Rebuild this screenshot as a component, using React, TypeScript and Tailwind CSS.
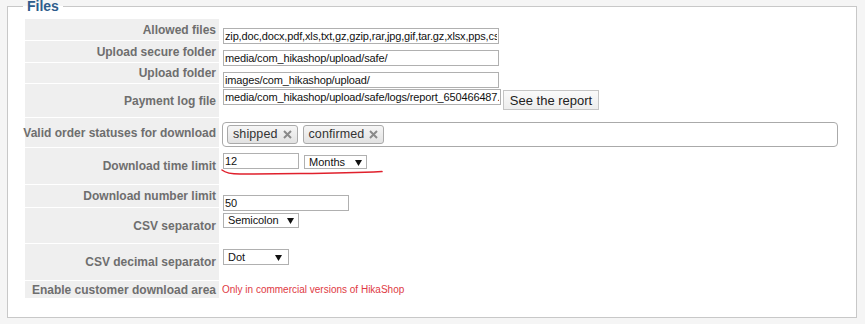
import React from "react";

function Arrow() {
  return (
    <svg width="7" height="7" viewBox="0 0 7 7" className="shrink-0">
      <polygon points="0,1 7,1 3.5,7" fill="#111" />
    </svg>
  );
}

function Cross() {
  return (
    <svg width="9" height="9" viewBox="0 0 9 9" className="shrink-0">
      <path d="M1 1 L8 8 M8 1 L1 8" stroke="#8a8a8a" strokeWidth="2" />
    </svg>
  );
}

function Tag({ text }: { text: string }) {
  return (
    <div className="flex h-[19px] items-center gap-[5px] rounded-[3px] border border-[#aaaaaa] bg-gradient-to-b from-[#f6f6f6] to-[#e2e2e2] pl-[5px] pr-[5px] text-[12.5px] tracking-[0.1px] text-[#333]">
      <span>{text}</span>
      <Cross />
    </div>
  );
}

const labelCls =
  "w-[194px] shrink-0 bg-[#efefef] flex items-center justify-end pr-[3px] text-[12px] font-bold text-[#6e6e6e] whitespace-nowrap";
const inputCls =
  "h-[16px] border border-[#b0b0b0] bg-white px-[1px] text-[11px] tracking-[-0.15px] text-[#111] outline-none";

export default function App() {
  return (
    <div className="w-[865px] h-[324px] bg-[#f5f5f5] pl-[7px] [font-family:'Liberation_Sans',Arial,sans-serif]">
      <fieldset className="box-border w-[850px] h-[318px] border border-[#c8c8c8] bg-white pl-[15px]">
        <legend className="px-[4px] text-[14px] leading-[13px] font-bold text-[#2d5c8c]">
          Files
        </legend>
        <div className="mt-[6px] ml-[2px] flex flex-col gap-[1px]">
          <div className="flex h-[21px]">
            <div className={labelCls}>Allowed files</div>
            <div className="ml-[1px] pl-[3px] pt-[4px]">
              <input
                readOnly
                value="zip,doc,docx,pdf,xls,txt,gz,gzip,rar,jpg,gif,tar.gz,xlsx,pps,csv,bmp,epub,mp3"
                className={inputCls + " w-[276px]"}
              />
            </div>
          </div>
          <div className="flex h-[21px]">
            <div className={labelCls}>Upload secure folder</div>
            <div className="ml-[1px] pl-[3px] pt-[4px]">
              <input readOnly value="media/com_hikashop/upload/safe/" className={inputCls + " w-[276px]"} />
            </div>
          </div>
          <div className="flex h-[20px]">
            <div className={labelCls}>Upload folder</div>
            <div className="ml-[1px] pl-[3px] pt-[4px]">
              <input readOnly value="images/com_hikashop/upload/" className={inputCls + " w-[276px]"} />
            </div>
          </div>
          <div className="flex h-[33px]">
            <div className={labelCls}>Payment log file</div>
            <div className="ml-[1px] pl-[3px] pt-[5px] flex items-start gap-[2px]">
              <input
                readOnly
                value="media/com_hikashop/upload/safe/logs/report_650466487.log"
                className={inputCls + " w-[278px]"}
              />
              <button className="mt-[1px] h-[20px] w-[96px] border border-[#c5c5c5] bg-gradient-to-b from-[#fafafa] to-[#ededed] text-[13px] text-[#222]">
                See the report
              </button>
            </div>
          </div>
          <div className="flex h-[29px]">
            <div className={labelCls}>Valid order statuses for download</div>
            <div className="ml-[1px] pl-[2px] pt-[4px]">
              <div className="box-border flex h-[25px] w-[616px] items-start gap-[5px] rounded-[4px] border border-[#aaaaaa] bg-white pl-[4px] pt-[2px]">
                <Tag text="shipped" />
                <Tag text="confirmed" />
              </div>
            </div>
          </div>
          <div className="flex h-[36px]">
            <div className={labelCls}>Download time limit</div>
            <div className="relative ml-[1px] pl-[3px] pt-[5px] flex items-start gap-[5px]">
              <input readOnly value="12" className={inputCls + " w-[76px]"} />
              <div className="mt-[2px] flex h-[14px] w-[63px] items-center justify-between border border-[#b0b0b0] bg-white pl-[4px] pr-[4px] text-[11px] text-[#111]">
                <span>Months</span>
                <Arrow />
              </div>
              <svg width="170" height="36" viewBox="0 0 170 36" className="pointer-events-none absolute left-0 top-0">
                <path
                  d="M2 22 Q 7 26 20 26 L 80 25.6 Q 130 25.2 162 23.6"
                  fill="none"
                  stroke="#e0202c"
                  strokeWidth="1.5"
                  strokeLinecap="round"
                />
              </svg>
            </div>
          </div>
          <div className="flex h-[22px]">
            <div className={labelCls}>Download number limit</div>
            <div className="ml-[1px] pl-[3px] pt-[5px]">
              <input readOnly value="50" className={inputCls + " w-[126px]"} />
            </div>
          </div>
          <div className="flex h-[35px]">
            <div className={labelCls}>CSV separator</div>
            <div className="ml-[1px] pl-[3px] pt-[5px]">
              <div className="flex h-[15px] w-[76px] items-center justify-between border border-[#b0b0b0] bg-white pl-[4px] pr-[4px] text-[11px] tracking-[-0.1px] text-[#111]">
                <span>Semicolon</span>
                <Arrow />
              </div>
            </div>
          </div>
          <div className="flex h-[36px]">
            <div className={labelCls}>CSV decimal separator</div>
            <div className="ml-[1px] pl-[3px] pt-[5px]">
              <div className="flex h-[16px] w-[66px] items-center justify-between border border-[#b0b0b0] bg-white pl-[4px] pr-[6px] text-[11px] text-[#111]">
                <span>Dot</span>
                <Arrow />
              </div>
            </div>
          </div>
          <div className="flex h-[17px]">
            <div className={labelCls}>Enable customer download area</div>
            <div className="ml-[1px] pl-[2px] flex items-center text-[10px] text-[#e03a44]">
              Only in commercial versions of HikaShop
            </div>
          </div>
        </div>
      </fieldset>
    </div>
  );
}
